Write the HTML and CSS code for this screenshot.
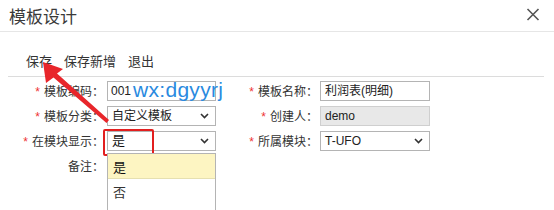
FILE: index.html
```html
<!DOCTYPE html>
<html lang="zh">
<head>
<meta charset="utf-8">
<link rel="stylesheet" href="styles.css">
</head>
<body>
<div class="dialog">
  <div class="header">
    <div class="title">模板设计</div>
    <svg class="close" width="14" height="13" viewBox="0 0 14 13"><path d="M1.5 1 L12.5 12 M12.5 1 L1.5 12" stroke="#555" stroke-width="1.6" fill="none"/></svg>
  </div>
  <div class="toolbar">
    <span class="tool">保存</span>
    <span class="tool">保存新增</span>
    <span class="tool">退出</span>
  </div>
  <div class="form">
    <div class="label l1"><span class="req">*</span>模板编码：</div>
    <div class="field code">001<span class="watermark">wx:dgyyrj</span></div>
    <div class="label l2"><span class="req">*</span>模板名称：</div>
    <div class="field">利润表(明细)</div>

    <div class="label l1"><span class="req">*</span>模板分类：</div>
    <div class="field select">自定义模板<svg class="chev" width="9" height="6" viewBox="0 0 9 6"><path d="M1 1 L4.5 4.5 L8 1" stroke="#333" stroke-width="1.6" fill="none"/></svg></div>
    <div class="label l2"><span class="req">*</span>创建人：</div>
    <div class="field disabled">demo</div>

    <div class="label l1"><span class="req">*</span>在模块显示：</div>
    <div class="field select yes">是<svg class="chev" width="9" height="6" viewBox="0 0 9 6"><path d="M1 1 L4.5 4.5 L8 1" stroke="#333" stroke-width="1.6" fill="none"/></svg></div>
    <div class="label l2"><span class="req">*</span>所属模块：</div>
    <div class="field select">T-UFO<svg class="chev" width="9" height="6" viewBox="0 0 9 6"><path d="M1 1 L4.5 4.5 L8 1" stroke="#333" stroke-width="1.6" fill="none"/></svg></div>

    <div class="label l1">备注：</div>
  </div>
  <div class="highlight"></div>
  <div class="dropdown">
    <div class="opt active">是</div>
    <div class="opt">否</div>
  </div>
  <svg class="arrow" width="554" height="210" viewBox="0 0 554 210"><polygon points="43,62 63,69 57,73.5 109,120 106.5,123 53.5,77.5 46,83" fill="#e8262b"/></svg>
</div>
</body>
</html>
```
FILE: styles.css
```css
* { box-sizing: border-box; }
html, body { margin: 0; padding: 0; background: #fff; }
body {
  width: 554px;
  height: 210px;
  overflow: hidden;
  font-family: "Liberation Sans", "Noto Sans CJK SC", sans-serif;
  color: #333;
}
.dialog { position: relative; width: 554px; height: 210px; overflow: hidden; }
.header {
  height: 32px;
  border-bottom: 1px solid #e6e6e6;
  display: flex;
  align-items: center;
  justify-content: space-between;
  padding: 0 14px 0 9px;
}
.title {
  font-family: "Noto Sans CJK SC", sans-serif;
  font-size: 17px;
  line-height: 31px;
  color: #3a3a3a;
}
.close { margin-top: -2px; }
.toolbar {
  margin: 0 10px 0 8px;
  height: 45px;
  padding: 20px 0 0 18px;
  border-bottom: 1px solid #dcdcdc;
  display: flex;
  gap: 12px;
  font-family: "Noto Sans CJK SC", sans-serif;
  font-size: 13px;
  line-height: 18px;
  color: #333;
}
.form {
  padding-top: 4px;
  display: grid;
  grid-template-columns: 107px 111px 102px 110px;
  grid-auto-rows: 20px;
  row-gap: 5px;
}
.label {
  font-family: "Noto Sans CJK SC", sans-serif;
  font-size: 12px;
  line-height: 20px;
  text-align: right;
  color: #333;
  white-space: nowrap;
}
.l1 { padding-right: 3px; }
.l2 { padding-right: 2px; }
.req { color: #e33; margin-right: 4px; font-family: "Liberation Sans", sans-serif; }
.field {
  position: relative;
  width: 109px;
  height: 20px;
  border: 1px solid #b4b4b4;
  background: #fff;
  font-size: 12px;
  line-height: 18px;
  padding-left: 4px;
  color: #222;
  display: flex;
  align-items: center;
  white-space: nowrap;
}
.form > .field:nth-child(4n) { width: 110px; }
.code { padding-left: 3px; }
.select { justify-content: space-between; padding-right: 6px; }
.yes { font-size: 13px; color: #111; }
.disabled { background: #e8e8e8; border-color: #cfcfcf; }
.watermark {
  position: absolute;
  left: 25px;
  top: -5px;
  font-size: 21px;
  line-height: 26px;
  color: #2a8ae0;
  letter-spacing: 0.3px;
}
.highlight {
  position: absolute;
  left: 103px;
  top: 129px;
  width: 51px;
  height: 27px;
  border: 2px solid #e21f1f;
  border-radius: 2px;
}
.dropdown {
  position: absolute;
  left: 107px;
  top: 153px;
  width: 109px;
  height: 57px;
  border: 1px solid #b4b4b4;
  border-bottom: none;
  background: #fff;
}
.opt {
  height: 25px;
  line-height: 25px;
  padding-left: 5px;
  font-family: "Noto Sans CJK SC", sans-serif;
  font-size: 13px;
  color: #333;
}
.opt.active { background: #fdf5c2; color: #111; border-bottom: 1px solid #e6e0b0; }
.arrow { position: absolute; left: 0; top: 0; pointer-events: none; }
```
